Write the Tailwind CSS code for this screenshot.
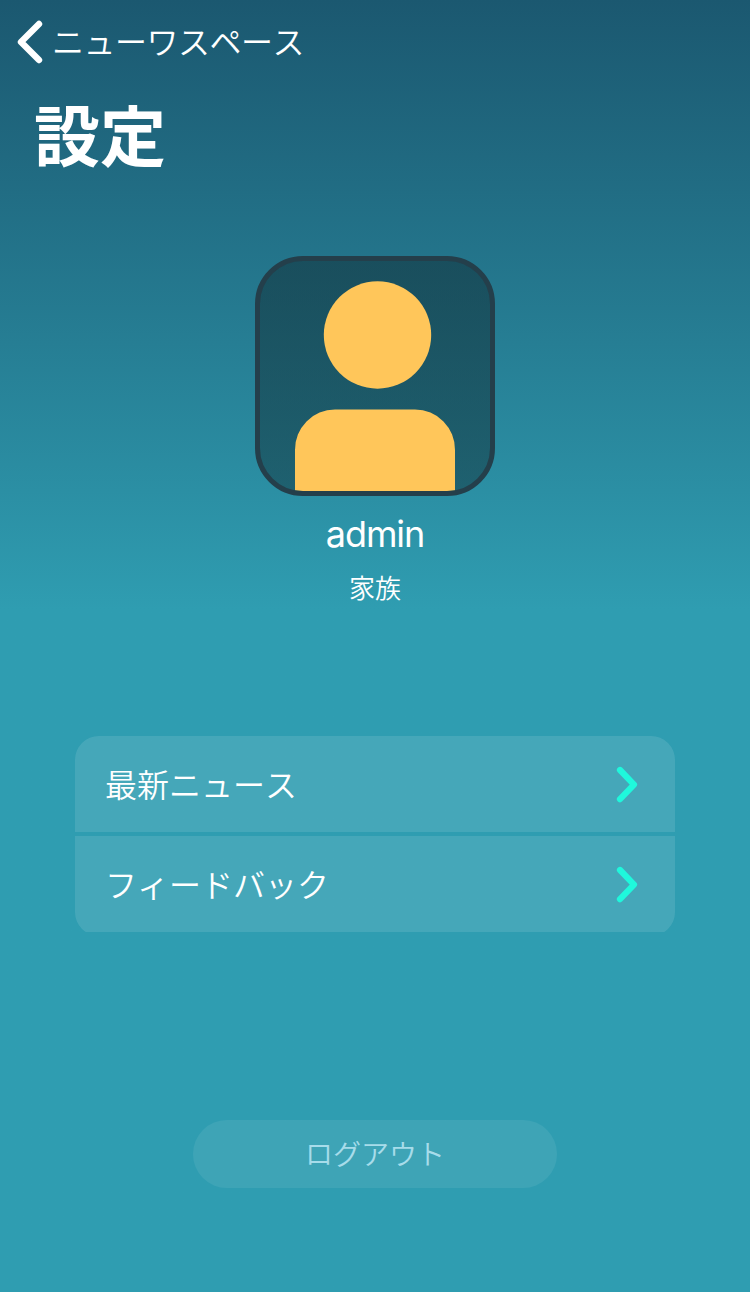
<!DOCTYPE html>
<html lang="ja">
<head>
    <meta charset="UTF-8">
    <meta name="viewport" content="width=device-width, initial-scale=1.0">
    <title>設定</title>
    <script src="https://cdn.jsdelivr.net/npm/@tailwindcss/browser@4"></script>
</head>
<body class="h-[1292px] overflow-hidden bg-[#2f9db1] bg-linear-to-b from-[#1b5870] to-[#2f9db1] to-[610px] text-white font-['Noto_Sans_CJK_JP',sans-serif] [font-kerning:none]">
    <div class="flex flex-col h-full">
        <!-- header -->
        <header>
            <a href="#" class="flex items-center h-[84px] pl-4">
                <svg class="w-7 h-11" viewBox="0 0 28 44" fill="none" stroke="currentColor" stroke-width="6.4" stroke-linecap="round" stroke-linejoin="round">
                    <path d="M23 4 5 22l18 18"/>
                </svg>
                <span class="ml-2 pb-1 text-[32px] leading-[48px] tracking-[-0.5px] font-[350]">ニューワスペース</span>
            </a>
            <h1 class="pl-[34px] text-[66px] leading-[96px] font-bold">設定</h1>
        </header>

        <!-- profile -->
        <section class="flex flex-col items-center mt-[76px]">
            <div class="w-60 h-60 rounded-[48px] border-[5px] border-[#243f4b] bg-linear-to-b from-[#112f37]/55 to-[#112f37]/48 bg-origin-border overflow-hidden">
                <svg class="w-[230px] h-[230px]" viewBox="0 0 230 230" fill="#ffc65a">
                    <circle cx="117.5" cy="74" r="53.7"/>
                    <path d="M35 230v-41a40 40 0 0 1 40-40.5h80a40 40 0 0 1 40 40.5v41z"/>
                </svg>
            </div>
            <p class="mt-4 text-[36px] leading-[44px] tracking-[-1.1px] font-['Inter',sans-serif]">admin</p>
            <p class="mt-[11px] text-[26px] leading-[40px] font-[350]">家族</p>
        </section>

        <!-- menu -->
        <nav class="w-[600px] h-[196px] mx-auto mt-[129px] overflow-hidden text-[32px] font-[350]">
            <a href="#" class="flex items-center justify-between h-24 pl-[30px] pr-9 rounded-t-3xl bg-white/11">
                <span class="pb-0.5">最新ニュース</span>
                <svg class="w-6 h-[38px]" viewBox="0 0 24 38" fill="none" stroke="#1ff8dc" stroke-width="6.2" stroke-linecap="round" stroke-linejoin="round">
                    <path d="M5 5 19 19.6 5 34.2"/>
                </svg>
            </a>
            <a href="#" class="flex items-center justify-between h-[100px] pb-1 mt-1 pl-[30px] pr-9 rounded-b-3xl bg-white/11">
                <span class="pb-0.5">フィードバック</span>
                <svg class="w-6 h-[38px]" viewBox="0 0 24 38" fill="none" stroke="#1ff8dc" stroke-width="6.2" stroke-linecap="round" stroke-linejoin="round">
                    <path d="M5 5 19 19.6 5 34.2"/>
                </svg>
            </a>
        </nav>

        <button type="button" class="w-[364px] h-[68px] pb-0.5 mx-auto mt-[188px] rounded-full bg-white/7 text-[28px] font-[350] text-[#a7dcea]">ログアウト</button>
    </div>
</body>
</html>
